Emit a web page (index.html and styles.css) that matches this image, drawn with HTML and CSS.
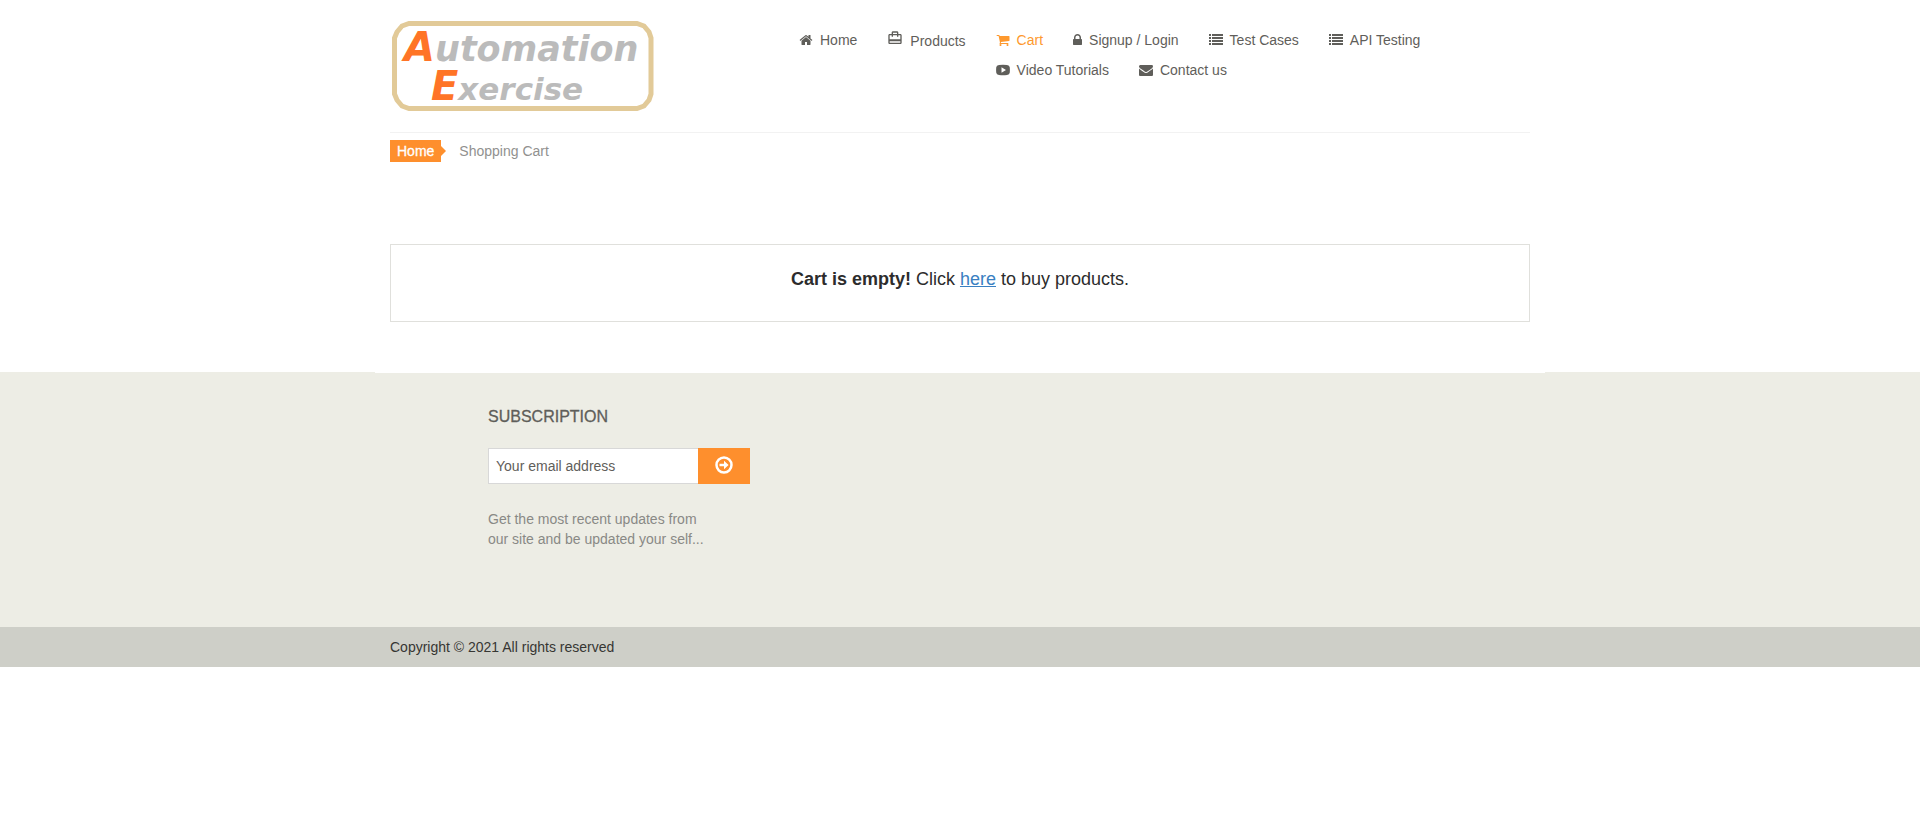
FILE: index.html
```html
<!DOCTYPE html>
<html lang="en">
<head>
<meta charset="utf-8">
<title>Automation Exercise - Checkout</title>
<link rel="stylesheet" href="styles.css">
</head>
<body>
<header class="container header">
  <a class="logo" href="#" aria-label="Automation Exercise">
    <svg width="262" height="92" viewBox="0 0 262 92">
      <path class="logo-frame" d="M17 3.500H245L252 6L257 12L259 18V74L257 80L252 86L245 88.500H17L10 86L5 80L2.500 74V18L5 12L10 6Z"/>
      <text x="12" y="41"><tspan class="logo-cap">A</tspan><tspan class="logo-first">utomation</tspan></text>
      <text x="39" y="80"><tspan class="logo-cap">E</tspan><tspan class="logo-second">xercise</tspan></text>
    </svg>
  </a>
  <nav class="menu-wrap">
    <ul class="menu">
      <li><a href="#"><svg class="icon" viewBox="0 0 1792 1792"><path d="M1472 992v480q0 26-19 45t-45 19h-384v-384h-256v384h-384q-26 0-45-19t-19-45v-480q0-1 .5-3t.5-3l575-474 575 474q1 2 1 6zm223-69l-62 74q-8 9-21 11h-3q-13 0-21-7l-692-577-692 577q-12 8-24 7-13-2-21-11l-62-74q-8-10-7-23.500t11-21.500l719-599q32-26 76-26t76 26l244 204v-195q0-14 9-23t23-9h192q14 0 23 9t9 23v408l219 182q10 8 11 21.500t-7 23.500z"/></svg>Home</a></li>
      <li class="tall"><a href="#"><svg class="icon icon-bag" viewBox="0 0 24 24"><path d="M20 6h-3V4c0-1.110-.89-2-2-2H9c-1.110 0-2 .89-2 2v2H4c-1.110 0-2 .89-2 2v11c0 1.110.89 2 2 2h16c1.110 0 2-.89 2-2V8c0-1.110-.89-2-2-2zM9 4h6v2H9V4zm11 15H4v-2h16v2zm0-5H4V8h3v2h2V8h6v2h2V8h3v6z"/></svg>Products</a></li>
      <li><a class="active" href="#"><svg class="icon" viewBox="0 0 1792 1792"><path d="M704 1536q0 52-38 90t-90 38-90-38-38-90 38-90 90-38 90 38 38 90zm896 0q0 52-38 90t-90 38-90-38-38-90 38-90 90-38 90 38 38 90zm128-1088v512q0 24-16.500 42.500t-40.500 21.500l-1044 122q13 60 13 70 0 16-24 64h920q26 0 45 19t19 45-19 45-45 19h-1024q-26 0-45-19t-19-45q0-11 8-31.500t16-36 21.500-40 15.500-29.500l-177-823h-204q-26 0-45-19t-19-45 19-45 45-19h256q16 0 28.500 6.500t19.500 15.500 13 24.500 8 26 5.500 29.500 4.500 26h1201q26 0 45 19t19 45z"/></svg>Cart</a></li>
      <li><a href="#"><svg class="icon icon-lock" viewBox="320 0 1152 1792"><path d="M640 768h512v-192q0-106-75-181t-181-75-181 75-75 181v192zm832 96v576q0 40-28 68t-68 28h-960q-40 0-68-28t-28-68v-576q0-40 28-68t68-28h32v-192q0-184 132-316t316-132 316 132 132 316v192h32q40 0 68 28t28 68z"/></svg>Signup / Login</a></li>
      <li><a href="#"><svg class="icon" viewBox="0 0 14 14"><path d="M0 1h2v2H0zM3 1h11v2H3zM0 4h2v2H0zM3 4h11v2H3zM0 7h2v2H0zM3 7h11v2H3zM0 10h2v2H0zM3 10h11v2H3z"/></svg>Test Cases</a></li>
      <li><a href="#"><svg class="icon" viewBox="0 0 14 14"><path d="M0 1h2v2H0zM3 1h11v2H3zM0 4h2v2H0zM3 4h11v2H3zM0 7h2v2H0zM3 7h11v2H3zM0 10h2v2H0zM3 10h11v2H3z"/></svg>API Testing</a></li>
      <li><a href="#"><svg class="icon" viewBox="0 0 14 14"><path fill-rule="evenodd" d="M3 2Q7 1.600 11 2Q13.600 2.100 13.800 4.500Q14 7 13.800 9.500Q13.600 11.900 11 12Q7 12.400 3 12Q.4 11.900.2 9.500Q0 7 .2 4.500Q.4 2.100 3 2ZM5.500 4.200V9.800L10 7Z"/></svg>Video Tutorials</a></li>
      <li><a href="#"><svg class="icon" viewBox="0 0 1792 1792"><path d="M1792 710v794q0 66-47 113t-113 47h-1472q-66 0-113-47t-47-113v-794q44 49 101 87 362 246 497 345 57 42 92.500 65.500t94.500 48 110 24.500h2q51 0 110-24.500t94.500-48 92.500-65.500q170-123 498-345 57-39 100-87zm0-294q0 79-49 151t-122 123q-376 261-468 325-10 7-42.500 31t-54 38.500-52 32.500-57.500 27-50 9h-2q-23 0-50-9t-57.500-27-52-32.500-54-38.500-42.500-31q-91-64-262-182.500t-205-142.500q-62-42-117-115.500t-55-136.500q0-78 41.500-130t118.500-52h1472q65 0 112.500 47t47.500 113z"/></svg>Contact us</a></li>
    </ul>
  </nav>
</header>
<main class="container">
  <ol class="breadcrumb">
    <li><a class="crumb-home" href="#">Home</a></li>
    <li class="crumb-current">Shopping Cart</li>
  </ol>
  <section class="cart">
    <p><b>Cart is empty!</b> Click <a href="#">here</a> to buy products.</p>
  </section>
</main>
<footer class="footer">
  <div class="footer-line"></div>
  <div class="container">
    <div class="subscription">
      <h2>Subscription</h2>
      <form class="subscribe">
        <input type="email" placeholder="Your email address" aria-label="Your email address">
        <button type="button" aria-label="Subscribe"><svg width="18" height="18" viewBox="0 0 18 18"><circle cx="9" cy="9" r="7.500" fill="none" stroke="currentColor" stroke-width="2.500"/><path fill="currentColor" d="M4.500 7.700H9V4.800L13.600 9L9 13.200V10.300H4.500Z"/></svg></button>
      </form>
      <p>Get the most recent updates from<br>our site and be updated your self...</p>
    </div>
  </div>
  <div class="copyright"><div class="container"><p>Copyright © 2021 All rights reserved</p></div></div>
</footer>
</body>
</html>
```
FILE: styles.css
```css
* { box-sizing: border-box; }
body {
  margin: 0;
  background: #fff;
  color: #5f5e5a;
  font: 14px/20px "Liberation Sans", Arial, sans-serif;
}
p, h2, ul, ol { margin: 0; padding: 0; }
ul, ol { list-style: none; }
a { color: inherit; text-decoration: none; }
.container {
  max-width: 1170px;
  margin: 0 auto;
  padding: 0 15px;
}
.header {
  display: flex;
  align-items: flex-start;
  justify-content: space-between;
  padding-top: 20px;
}
.logo { margin-left: 2px; }
.logo svg { display: block; }
.logo-frame { fill: none; stroke: #e2ca98; stroke-width: 5; }
.logo text {
  fill: #bbb;
  font-family: "DejaVu Sans", sans-serif;
  font-style: oblique;
  font-weight: bold;
}
.logo-cap { fill: #ff7426; font-size: 40px; }
.logo-first { font-size: 35px; }
.logo-second { font-size: 31px; }
.menu-wrap {
  flex: 0 1 750px;
  padding: 10px 0 0 19px;
}
.menu li {
  float: left;
  height: 30px;
  margin-right: 30px;
}
.menu .tall { height: 32px; }
.menu .tall a { line-height: 22px; }
.menu a {
  display: flex;
  align-items: center;
  gap: 7px;
}
.menu .active { color: #fe992e; }
.icon {
  width: 14px;
  height: 14px;
  fill: currentColor;
}
.icon-lock { width: 9px; }
.icon-bag {
  width: 16px;
  height: 16px;
  margin-bottom: 6px;
}
.breadcrumb {
  display: flex;
  gap: 18px;
  padding: 7px 0 82px;
  margin-top: 20px;
  border-top: 1px solid #f2f2f2;
}
.breadcrumb li { line-height: 22px; }
.crumb-home {
  position: relative;
  display: block;
  padding: 0 7px;
  background: #fe8f2d;
  color: #fff;
  -webkit-text-stroke: 0.3px #fff;
}
.crumb-home::after {
  content: "";
  position: absolute;
  left: 100%;
  top: 6px;
  border: 5px solid transparent;
  border-left-color: #fe8f2d;
}
.crumb-current { color: #91918f; }
.cart {
  padding: 22px 0 29px;
  border: 1px solid #e0e0dc;
  margin-bottom: 50px;
  color: #2c2c2c;
  font-size: 18px;
  line-height: 25px;
  text-align: center;
}
.cart a { color: #3a80c2; text-decoration: underline; }
.footer { background: #edede5; }
.footer-line {
  max-width: 1170px;
  height: 1px;
  margin: 0 auto;
  background: #fff;
}
.subscription { padding: 34px 0 78px 98px; }
.subscription h2 {
  margin-bottom: 21px;
  font-size: 16px;
  font-weight: normal;
  line-height: 20px;
  text-transform: uppercase;
  -webkit-text-stroke: 0.3px currentColor;
}
.subscribe {
  display: flex;
  margin-bottom: 25px;
}
.subscribe input {
  width: 210px;
  height: 36px;
  padding: 0 7px;
  border: 1px solid #d8d8d8;
  border-right: 0;
  border-radius: 0;
  background: #fff;
  font: inherit;
}
.subscribe input::placeholder { color: #5f5e5a; }
.subscribe button {
  width: 52px;
  padding: 0 0 2px;
  border: 0;
  background: #fe8f2d;
  color: #fff;
}
.subscribe svg { display: block; margin: 0 auto; }
.subscription p { color: #898985; }
.copyright {
  padding: 10px 0;
  background: #cecfc8;
  color: #363633;
}
```
